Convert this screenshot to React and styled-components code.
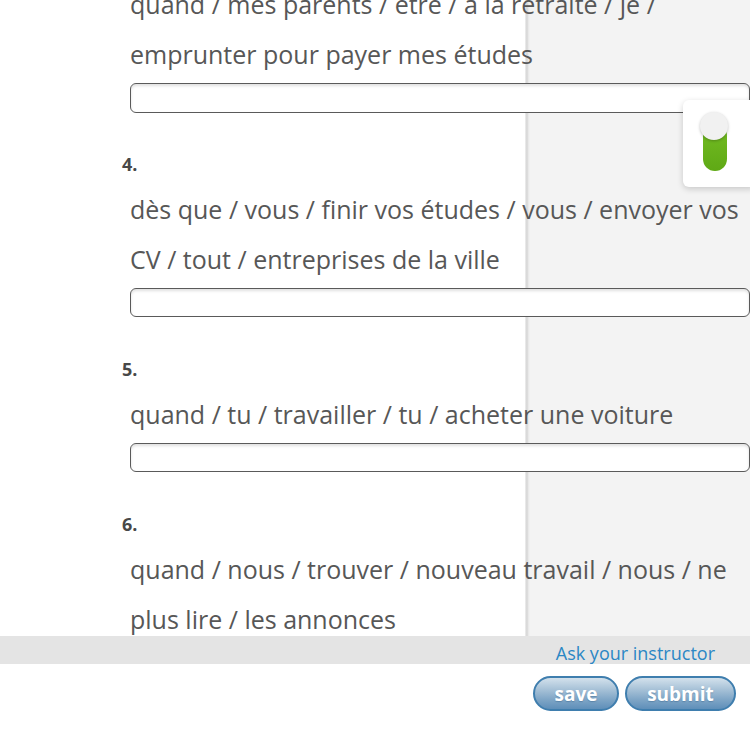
import React from 'react'
import styled, { createGlobalStyle } from 'styled-components'

const GlobalStyle = createGlobalStyle`
  html, body {
    margin: 0;
    padding: 0;
    background: #fff;
    font-family: "Open Sans", "Liberation Sans", sans-serif;
  }
`

const Page = styled.div`
  width: 750px;
  height: 750px;
  display: flex;
  flex-direction: column;
  overflow: hidden;
`

const Workspace = styled.div`
  position: relative;
  height: 636px;
  flex-shrink: 0;
  overflow: hidden;
  background: linear-gradient(
    to right,
    #fff 0,
    #fff 525px,
    #f0f0f0 525px,
    #d2d2d2 527px,
    #e6e6e6 528px,
    #f3f3f3 530px
  );
`

const Questions = styled.div`
  margin-top: -21px;
  padding-left: 122px;
`

const Question = styled.section`
  margin-bottom: 37.4px;
`

const Number = styled.div`
  font-size: 18px;
  font-weight: 700;
  line-height: 24px;
  color: #484848;
  padding-top: 2px;
  margin-bottom: 8px;
`

const Prompt = styled.div`
  padding-left: 8px;
  font-size: 25px;
  line-height: 50px;
  color: #575757;
  white-space: nowrap;
`

const Answer = styled.input`
  display: block;
  box-sizing: border-box;
  margin: 4px 0 0 8px;
  width: 620px;
  height: 29.5px;
  border: 1.5px solid #5a5a5a;
  border-radius: 6px;
  background: #fff;
  box-shadow: inset 0 2px 3px rgba(0, 0, 0, 0.12);
  outline: none;
`

const ToggleCard = styled.div`
  position: absolute;
  top: 100px;
  right: -6px;
  width: 73px;
  height: 87px;
  background: #fff;
  border-radius: 6px;
  box-shadow: 0 2px 6px rgba(0, 0, 0, 0.18);
`

const Track = styled.div`
  position: absolute;
  left: 20px;
  top: 24px;
  width: 24px;
  height: 47px;
  border-radius: 12px;
  background: linear-gradient(to bottom, #74bd24, #5fa915);
`

const Knob = styled.div`
  position: absolute;
  left: 17px;
  top: 12px;
  width: 28px;
  height: 28px;
  border-radius: 50%;
  background: #f1f1f1;
  box-shadow: 0 1px 3px rgba(0, 0, 0, 0.25);
`

const HelpBar = styled.div`
  height: 28px;
  background: #e4e4e4;
  display: flex;
  justify-content: flex-end;
  align-items: flex-end;
  padding-right: 35px;
`

const HelpLink = styled.a`
  font-size: 18px;
  line-height: 24px;
  margin-bottom: -1px;
  color: #2b87c4;
  text-decoration: none;
`

const Actions = styled.div`
  display: flex;
  justify-content: flex-end;
  gap: 6px;
  padding: 12px 14px 0 0;
`

const Pill = styled.button`
  box-sizing: border-box;
  height: 35px;
  width: ${p => p.$w}px;
  border: 2px solid #3f7eae;
  border-radius: 18px;
  background: linear-gradient(to bottom, #d3e1ec 0%, #a9c3d8 35%, #7ea5c6 70%, #5f8fb9 100%);
  color: #fff;
  font-family: "Open Sans", "Liberation Sans", sans-serif;
  font-size: 19px;
  font-weight: 700;
  text-shadow: 0 1px 1px rgba(40, 80, 120, 0.35);
  padding: 0;
`

const questions = [
  {
    n: null,
    lines: ['quand / mes parents / être / à la retraite / je /', 'emprunter pour payer mes études'],
  },
  {
    n: '4.',
    lines: ['dès que / vous / finir vos études / vous / envoyer vos', 'CV / tout / entreprises de la ville'],
  },
  {
    n: '5.',
    lines: ['quand / tu / travailler / tu / acheter une voiture'],
  },
  {
    n: '6.',
    lines: ['quand / nous / trouver / nouveau travail / nous / ne', 'plus lire / les annonces'],
    last: true,
  },
]

export default function App() {
  return (
    <Page>
      <GlobalStyle />
      <Workspace>
        <Questions>
          {questions.map((q, i) => (
            <Question key={i}>
              {q.n && <Number>{q.n}</Number>}
              {q.lines.map(l => (
                <Prompt key={l}>{l}</Prompt>
              ))}
              {!q.last && <Answer type="text" />}
            </Question>
          ))}
        </Questions>
        <ToggleCard>
          <Track />
          <Knob />
        </ToggleCard>
      </Workspace>
      <HelpBar>
        <HelpLink href="#">Ask your instructor</HelpLink>
      </HelpBar>
      <Actions>
        <Pill $w={86}>save</Pill>
        <Pill $w={111}>submit</Pill>
      </Actions>
    </Page>
  )
}
